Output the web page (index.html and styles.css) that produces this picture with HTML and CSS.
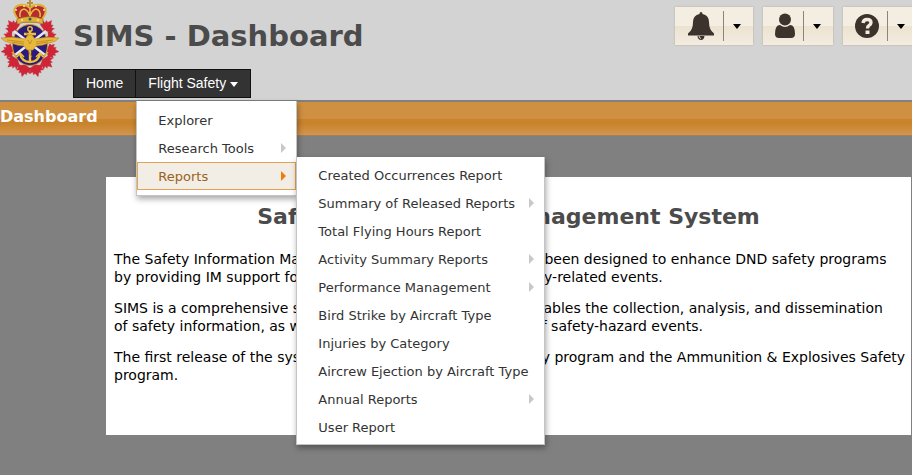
FILE: index.html
```
<!DOCTYPE html>
<html lang="en">
<head>
<meta charset="utf-8">
<title>SIMS - Dashboard</title>
<link rel="stylesheet" href="styles.css">
</head>
<body>
<header class="header">
  <svg class="emblem" viewBox="0 0 60 78" aria-hidden="true">
    <defs>
      <path id="leaf" d="M0-8 L2-4 L4-5 L4-2 L7-3 L6 0 L7 2 L1 4 L1 7 L-1 7 L-1 4 L-7 2 L-6 0 L-7-3 L-4-2 L-4-5 L-2-4Z"/>
    </defs>
    <g fill="#d02536" stroke="#b3343f" stroke-width=".3">
      <use href="#leaf" transform="translate(13 27) rotate(-35)"/>
      <use href="#leaf" transform="translate(47 27) rotate(35)"/>
      <use href="#leaf" transform="translate(9 51) rotate(-95)"/>
      <use href="#leaf" transform="translate(51 51) rotate(95)"/>
      <use href="#leaf" transform="translate(14 62) rotate(-130)"/>
      <use href="#leaf" transform="translate(46 62) rotate(130)"/>
      <use href="#leaf" transform="translate(24 69) rotate(-165)"/>
      <use href="#leaf" transform="translate(36 69) rotate(165)"/>
      <use href="#leaf" transform="translate(9 36) rotate(-70) scale(.7)"/>
      <use href="#leaf" transform="translate(51 36) rotate(70) scale(.7)"/>
    </g>
    <ellipse cx="30" cy="45" rx="17.500" ry="20.500" fill="#2b1a7a" stroke="#c39a35" stroke-width="1"/>
    <path d="M14 31 45 55M46 31 15 55" stroke="#e6e9f2" stroke-width="2.400"/>
    <path d="M43 57l5-5M17 57l-5-5" stroke="#d8a92d" stroke-width="1.500"/>
    <g fill="none" stroke="#ecc23a">
      <circle cx="30" cy="29" r="2.200" stroke-width="1.500"/>
      <path d="M30 31V63M24 34H36" stroke-width="2.400"/>
      <path d="M20 54Q22 62 30 62Q38 62 40 54" stroke-width="2.400"/>
      <path d="M17 57l3-4 4 4M43 57l-3-4-4 4" stroke-width="1.500"/>
      <path d="M26 33q8 5 4 11t2 13" stroke="#b9821e" stroke-width="1"/>
    </g>
    <path d="M1 38Q13 36 25 39L28 35H32L35 39Q47 36 59 38Q56 42 49 43Q42 46 36 46L33 50H27L24 46Q18 46 11 43Q4 42 1 38Z" fill="#e6b83b" stroke="#b98628" stroke-width=".6"/>
    <path d="M7 40 24 42M53 40 36 42M28 40l2 4 2-4M12 42l12 2M48 42l-12 2" stroke="#b37e1f" stroke-width=".7" fill="none"/>
    <path d="M18 19Q11 10 17 6Q25 3 30 8Q35 3 43 6Q49 10 42 19L41 22H19Z" fill="#b72a2d" stroke="#dfb036" stroke-width="2"/>
    <path d="M20 17Q19 10 24 9Q28 10 30 16Q32 10 36 9Q41 10 40 17M30 8V18" stroke="#e5bd45" stroke-width="1.500" fill="none"/>
    <path d="M17 19Q30 14 43 19V24Q30 20 17 24Z" fill="#e0b03a" stroke="#8d6420" stroke-width=".6"/>
    <path d="M30 0V7M27 3H33" stroke="#b99036" stroke-width="2"/>
    <g fill="#f2e6ac"><circle cx="22" cy="20" r="1"/><circle cx="38" cy="20" r="1"/><circle cx="16" cy="10" r="1"/><circle cx="44" cy="10" r="1"/><circle cx="24" cy="6" r="1"/><circle cx="36" cy="6" r="1"/></g>
    <circle cx="30" cy="19" r="1.500" fill="#315a54"/>
  </svg>
  <div class="brand">
    <h1 class="title">SIMS - Dashboard</h1>
    <nav class="nav">
      <a class="nav-link" href="#">Home</a>
      <div class="nav-drop">
        <a class="nav-link" href="#">Flight Safety <svg class="nav-caret" viewBox="0 0 8 5" aria-hidden="true"><path d="M0 0H8L4 5Z"/></svg></a>
        <ul class="menu">
          <li><a class="item" href="#">Explorer</a></li>
          <li><a class="item more" href="#">Research Tools</a></li>
          <li class="parent"><a class="item more active" href="#">Reports</a>
            <ul class="menu submenu">
              <li><a class="item" href="#">Created Occurrences Report</a></li>
              <li><a class="item more" href="#">Summary of Released Reports</a></li>
              <li><a class="item" href="#">Total Flying Hours Report</a></li>
              <li><a class="item more" href="#">Activity Summary Reports</a></li>
              <li><a class="item more" href="#">Performance Management</a></li>
              <li><a class="item" href="#">Bird Strike by Aircraft Type</a></li>
              <li><a class="item" href="#">Injuries by Category</a></li>
              <li><a class="item" href="#">Aircrew Ejection by Aircraft Type</a></li>
              <li><a class="item more" href="#">Annual Reports</a></li>
              <li><a class="item" href="#">User Report</a></li>
            </ul>
          </li>
        </ul>
      </div>
    </nav>
  </div>
  <div class="tools">
    <div class="split">
      <button class="main" type="button" aria-label="Notifications"><svg width="28" height="28" viewBox="0 0 28 28"><path d="M14 0q1.500 0 1.500 2Q22 3.500 22 10Q22 18 27 21.500V23.500H1V21.500Q6 18 6 10Q6 3.500 12.500 2Q12.500 0 14 0Z"/><path d="M10.500 24H17.500Q17 28 14 28T10.500 24Z"/><path d="M12 24q0 2 2 2.500" stroke="#f3ece0" fill="none"/></svg></button>
      <button class="arrow" type="button" aria-label="Notification options"><svg width="8" height="5" viewBox="0 0 8 5"><path d="M0 0H8L4 5Z"/></svg></button>
    </div>
    <div class="split">
      <button class="main" type="button" aria-label="Account"><svg width="20" height="26" viewBox="0 0 20 26"><circle cx="10" cy="6.500" r="6"/><path d="M5 12Q10 16 15 12Q20 12 20 21Q20 25 16 25H4Q0 25 0 21Q0 12 5 12Z"/></svg></button>
      <button class="arrow" type="button" aria-label="Account options"><svg width="8" height="5" viewBox="0 0 8 5"><path d="M0 0H8L4 5Z"/></svg></button>
    </div>
    <div class="split">
      <button class="main" type="button" aria-label="Help"><svg width="24" height="26" viewBox="0 0 24 26"><circle cx="12" cy="13" r="12"/><path d="M8 10Q8.500 6.500 12 6.500Q16 6.500 16 9.500Q16 11.500 14 12.500Q12.500 13.300 12.500 15.500" fill="none" stroke="#f3ece0" stroke-width="3.400"/><path d="M10.500 17.500h4v3.500h-4z" fill="#f3ece0"/></svg></button>
      <button class="arrow" type="button" aria-label="Help options"><svg width="8" height="5" viewBox="0 0 8 5"><path d="M0 0H8L4 5Z"/></svg></button>
    </div>
  </div>
</header>
<div class="strip">Dashboard</div>
<main class="panel">
  <h2 class="heading">Safety Information Management System</h2>
  <p>The Safety Information Management System (SIMS) has now been designed to enhance DND safety programs<br>by providing IM support for the management of all DND safety-related events.</p>
  <p>SIMS is a comprehensive safety information system which enables the collection, analysis, and dissemination<br>of safety information, as well as the effective management of safety-hazard events.</p>
  <p>The first release of the system supports the DND Flight Safety program and the Ammunition &amp; Explosives Safety<br>program.</p>
</main>
</body>
</html>
```
FILE: styles.css
```
* { box-sizing: border-box; }
body {
  margin: 0;
  min-height: 100vh;
  overflow-x: hidden;
  background: #808080;
  color: #000;
  font-family: "DejaVu Sans", sans-serif;
  font-size: 14px;
}
.header {
  display: flex;
  align-items: flex-start;
  background: #d3d3d3;
  border-bottom: 2px solid #808080;
  padding-bottom: 2px;
}
.emblem { width: 60px; height: 78px; flex: none; }
.brand { margin-left: 13px; }
.title {
  margin: 0;
  padding-top: 16px;
  height: 69px;
  font-size: 29px;
  line-height: 40px;
  color: #4b4b4b;
  white-space: nowrap;
}
.nav { display: flex; width: max-content; background: #333; border: 1px solid #111; }
.nav-link {
  display: block;
  padding: 0 12px;
  font: 14px/27px "Liberation Sans", sans-serif;
  color: #fff;
  text-decoration: none;
  white-space: nowrap;
}
.nav-drop { position: relative; border-left: 1px solid #111; }
.nav-caret { width: 8px; height: 5px; fill: #fff; vertical-align: middle; }
.menu {
  position: absolute;
  z-index: 2;
  top: 31px;
  left: 0;
  width: 161px;
  margin: 0;
  padding: 5px 0;
  list-style: none;
  background: #fff;
  border: 1px solid #c4c4c4;
  border-top-width: 0;
  box-shadow: 1px 3px 6px rgba(0, 0, 0, .35);
}
.parent { position: relative; }
.submenu { top: -5px; left: 159px; width: 249px; padding: 4px 0 3px; }
.item {
  display: flex;
  align-items: center;
  justify-content: space-between;
  height: 28px;
  padding: 0 9px 0 20px;
  border: 1px solid transparent;
  font-size: 13px;
  color: #333;
  text-decoration: none;
  white-space: nowrap;
}
.more::after {
  content: "";
  border: 5px solid transparent;
  border-left-color: #c8c8c8;
  border-right-width: 0;
}
.active { background: #f3eee5; border-color: #e5a052; color: #9c6219; }
.active::after { border-left-color: #f07d0a; }
.tools { display: flex; gap: 10px; margin: 7px -5px 0 auto; }
.split {
  display: flex;
  height: 38px;
  padding: 4px 0;
  background: linear-gradient(#f4ede1 50%, #ece2d0 51%, #f3ece0);
  box-shadow: 0 0 2px #b9ad9b;
}
.main, .arrow {
  display: flex;
  align-items: center;
  border: 0;
  background: none;
  fill: #3c332c;
}
.main { padding: 0 8px 0 12px; border-right: 1px solid #8c8479; }
.arrow { width: 29px; justify-content: center; padding: 0 4px 0 0; fill: #000; }
.strip {
  height: 34px;
  font-size: 16px;
  font-weight: bold;
  line-height: 29px;
  color: #fff;
  background: linear-gradient(#cf9140, #cf9043 50%, #c9832b 52%, #c9832b 65%, #d3964f);
  border-bottom: 1px solid #a47c5e;
}
.panel {
  margin: 41px 1px 0 106px;
  padding: 24px 8px 38px;
  background: #fff;
  white-space: nowrap;
}
.heading {
  margin: 0 0 17px;
  font-size: 22px;
  line-height: 32px;
  text-align: center;
  color: #4b4b4b;
}
.panel p { margin: 0 0 13px; line-height: 18px; }
```
